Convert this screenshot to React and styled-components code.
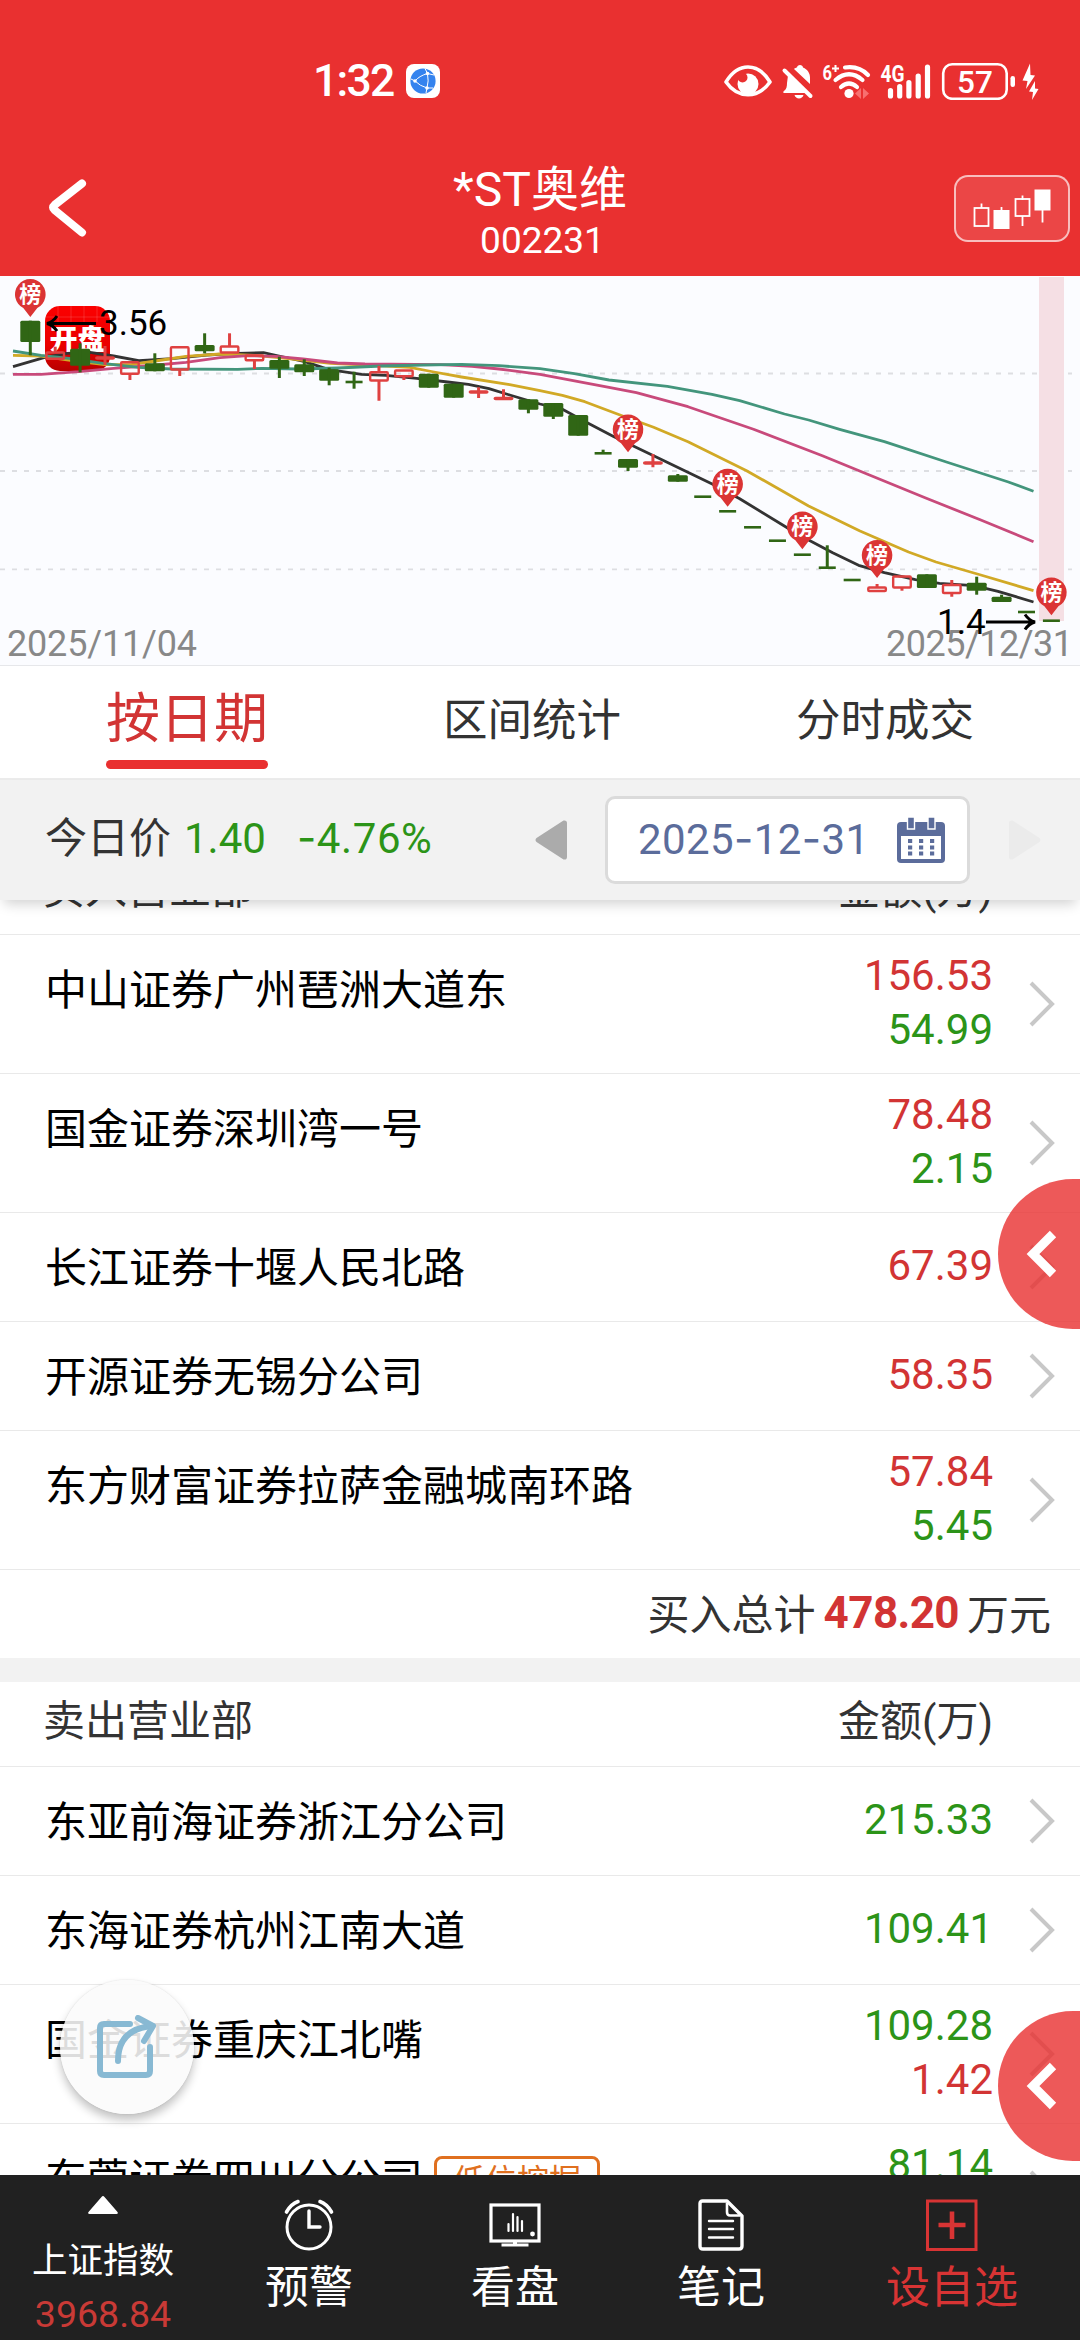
import React from 'react';
import styled, { createGlobalStyle, css } from 'styled-components';

const COLOR = {
  brand: '#e93030',
  red: '#d23434',
  green: '#2c9418',
  text: '#333',
  line: '#e9e9e9',
  panel: '#f2f2f2',
  date: '#5b6c9b',
  nav: '#212121',
};

const FONT = 'Roboto, "Noto Sans CJK SC", sans-serif';

const GlobalStyle = createGlobalStyle`
  * {
    box-sizing: border-box;
  }

  body {
    margin: 0;
    font-family: ${FONT};
    background: #fff;
  }

  svg {
    display: block;
    flex: none;
  }
`;

const Screen = styled.div`
  position: relative;
  display: flex;
  flex-direction: column;
  width: 1080px;
  height: 2340px;
  overflow: hidden;
  background: #fff;
`;

/* ---------- header ---------- */

const Header = styled.header`
  flex: none;
  height: 276px;
  background: ${COLOR.brand};
  color: #fff;
`;

const StatusBar = styled.div`
  display: flex;
  align-items: center;
  height: 140px;
  padding: 22px 40px 0 313px;
`;

const Clock = styled.span`
  width: 93px;
  font-size: 44.5px;
  font-weight: 500;
  letter-spacing: -1.8px;
  line-height: 1;
`;

const StatusIcons = styled.div`
  display: flex;
  align-items: center;
  margin-left: auto;
`;

const TitleBar = styled.div`
  display: grid;
  grid-template-columns: 126px 1fr 126px;
  align-items: center;
  height: 136px;
`;

const BackButton = styled.div`
  padding-left: 47px;
`;

const TitleBlock = styled.div`
  display: flex;
  flex-direction: column;
  align-items: center;
  padding-top: 8px;
`;

const Title = styled.div`
  font-size: 48px;
  line-height: 58px;
`;

const StockCode = styled.div`
  padding-left: 5px;
  font-size: 37px;
  line-height: 44px;
`;

const KlineButton = styled.div`
  display: flex;
  align-items: center;
  justify-content: center;
  width: 116px;
  height: 67px;
  margin-top: 1px;
  border: 2px solid rgba(255, 255, 255, 0.65);
  border-radius: 14px;
  background: #eb4646;
`;

/* ---------- chart ---------- */

const ChartBox = styled.div`
  flex: none;
  height: 390px;
  background: #fbfcff;
  border-bottom: 1px solid #e6e7ea;
`;

/* ---------- tabs and date bar ---------- */

const Tabs = styled.div`
  flex: none;
  display: flex;
  justify-content: space-between;
  height: 114px;
  padding: 0 106px;
  border-bottom: 2px solid #ebebeb;
`;

const Tab = styled.div`
  display: flex;
  flex-direction: column;
  align-items: center;
  font-size: 44.5px;
  line-height: 111px;
  color: ${COLOR.text};

  ${props => props.$active && css`
    font-size: 54px;
    line-height: 108px;
    color: ${COLOR.red};

    &::after {
      content: '';
      width: 162px;
      height: 9px;
      margin-top: -14px;
      border-radius: 5px;
      background: ${COLOR.brand};
    }
  `}
`;

const DateBar = styled.div`
  position: relative;
  z-index: 1;
  flex: none;
  display: flex;
  align-items: center;
  height: 120px;
  padding: 0 39px 0 45px;
  background: ${COLOR.panel};
  box-shadow: 0 8px 12px -4px rgba(0, 0, 0, 0.18);
`;

const PriceLabel = styled.span`
  padding-bottom: 3px;
  font-size: 42px;
  line-height: 1;
  color: ${COLOR.text};
`;

const Price = styled.span`
  margin-left: ${props => props.$gap}px;
  padding-bottom: 3px;
  font-size: 42px;
  line-height: 1;
  letter-spacing: ${props => props.$spacing || 0}px;
  color: ${COLOR.green};
`;

const Dash = styled.span`
  font-family: Inter, sans-serif;
`;

const DatePicker = styled.div`
  display: flex;
  align-items: center;
  justify-content: space-between;
  width: 365px;
  height: 88px;
  margin: 0 39px 0 38px;
  padding: 0 22px 0 30px;
  border: 3px solid #dbdbdb;
  border-radius: 10px;
  background: #fff;
  font-size: 42px;
  color: ${COLOR.date};
`;

const DateValue = styled.span`
  padding-bottom: 3px;
  letter-spacing: 0.4px;
`;

const Spacer = styled.div`
  flex: 1;
`;

/* ---------- list ---------- */

const ListViewport = styled.div`
  flex: 1;
  min-height: 0;
  overflow: hidden;
`;

// The list is scrolled, its first heading sits half under the date bar.
const ListContent = styled.div`
  margin-top: -50px;
`;

const SectionHead = styled.div`
  display: flex;
  justify-content: space-between;
  height: 85px;
  padding: 0 87px 0 43px;
  border-bottom: 1px solid ${COLOR.line};
  font-size: 42px;
  line-height: 80px;
  color: ${COLOR.text};
`;

const Row = styled.div`
  display: flex;
  align-items: flex-start;
  height: ${props => (props.$tall ? 139 : 109)}px;
  padding: 0 24px 0 45px;
  border-bottom: 1px solid ${COLOR.line};
`;

const BranchName = styled.div`
  display: flex;
  align-items: center;
  height: 102px;
  font-size: 42px;
  white-space: nowrap;
  color: #000;
`;

const Tag = styled.span`
  margin: 13px 0 0 11px;
  padding: 0 16px;
  border: 3px solid #e0701f;
  border-radius: 8px;
  font-size: 32px;
  line-height: 45px;
  color: #e0701f;
`;

const Amounts = styled.div`
  margin-left: auto;
  padding-top: ${props => (props.$tall ? 14 : 26)}px;
  text-align: right;
`;

const Amount = styled.div`
  font-size: 42px;
  line-height: 54px;
  color: ${props => COLOR[props.$color]};
`;

const RowArrow = styled.div`
  display: flex;
  align-items: center;
  height: 100%;
  margin-left: 36px;
`;

const Total = styled.div`
  display: flex;
  align-items: center;
  justify-content: flex-end;
  gap: 8px;
  height: 88px;
  padding: 0 29px 6px 0;
  font-size: 42px;
  color: ${COLOR.text};

  strong {
    padding-top: 4px;
    font-size: 44px;
    font-weight: 700;
    letter-spacing: -0.6px;
    color: ${COLOR.red};
  }
`;

const Divider = styled.div`
  height: 24px;
  background: ${COLOR.panel};
`;

/* ---------- floating buttons ---------- */

const SideHandle = styled.div`
  position: absolute;
  z-index: 2;
  top: ${props => props.$top}px;
  right: 0;
  display: flex;
  align-items: center;
  width: 82px;
  height: 150px;
  padding-left: 28px;
  border-radius: 75px 0 0 75px;
  background: rgba(232, 48, 48, 0.8);
`;

const ShareButton = styled.div`
  position: absolute;
  z-index: 2;
  top: 1980px;
  left: 60px;
  display: flex;
  align-items: center;
  justify-content: center;
  width: 134px;
  height: 134px;
  border-radius: 50%;
  background: rgba(250, 250, 250, 0.88);
  box-shadow: 0 6px 10px rgba(0, 0, 0, 0.24), 0 0 2px rgba(0, 0, 0, 0.12);
`;

/* ---------- bottom navigation ---------- */

const Nav = styled.nav`
  position: relative;
  z-index: 3;
  flex: none;
  display: grid;
  grid-template-columns: repeat(4, 206px) 1fr;
  height: 165px;
  background: ${COLOR.nav};
  color: #fff;
`;

const NavItem = styled.div`
  display: flex;
  flex-direction: column;
  align-items: center;
  padding-top: 20px;
  font-size: 44px;
  color: ${props => (props.$accent ? '#d83434' : '#fff')};
`;

const NavIcon = styled.div`
  display: flex;
  align-items: center;
  height: 60px;
`;

const NavLabel = styled.div`
  line-height: 67px;
`;

const IndexName = styled.div`
  padding-top: 20px;
  font-size: 35.5px;
  line-height: 52px;
`;

const IndexValue = styled.div`
  font-size: 37.5px;
  line-height: 54px;
  color: #c93a36;
`;

/* ---------- data ---------- */

// [kind, body top, body bottom, wick top, wick bottom], kind: g fall, r rise, d flat
const CANDLES = [
  ['g', 44.7, 66, 44.7, 79.3],
  ['r', 76, 83.3, 70.7, 83.3],
  ['g', 72.7, 89.7, 67.3, 96.3],
  ['r', 81, 83, 70, 89],
  ['r', 85.7, 98.3, 85.7, 104],
  ['g', 87.3, 95.3, 77.3, 95.3],
  ['r', 70.7, 94, 70.7, 100],
  ['g', 69, 75.3, 57.3, 77.3],
  ['r', 70, 77, 57.3, 77],
  ['r', 79, 84.7, 79, 93],
  ['g', 84, 92.7, 80.7, 102],
  ['g', 88.3, 96.3, 83.3, 100],
  ['g', 93.3, 104.7, 91.7, 109.3],
  ['d', 106, 106, 95.7, 112.7],
  ['r', 95.7, 105, 89.7, 124.7],
  ['r', 94, 100.7, 94, 104],
  ['g', 97.7, 111.7, 97.7, 111.7],
  ['g', 107.7, 121.7, 107.7, 121.7],
  ['r', 115, 117, 111.3, 122],
  ['r', 121.5, 123.5, 113.3, 124],
  ['g', 123.3, 133.7, 123.3, 137.3],
  ['g', 127, 140.7, 127, 143],
  ['g', 139, 159.7, 139, 159.7],
  ['d', 177.3, 177.3, 173.7, 177.3],
  ['g', 183, 191.7, 183, 195],
  ['r', 186, 188, 178, 191.3],
  ['g', 199.3, 205.7, 198, 205.7],
  ['d', 220.7, 220.7, 220.7, 220.7],
  ['d', 235.3, 235.3, 235.3, 235.3],
  ['d', 251.3, 251.3, 251.3, 251.3],
  ['d', 264.7, 264.7, 264.7, 264.7],
  ['d', 278.7, 278.7, 278.7, 278.7],
  ['d', 291.7, 291.7, 269.3, 291.7],
  ['d', 304, 304, 304, 304],
  ['r', 311, 315.5, 308, 315.5],
  ['r', 300, 312, 300, 314.7],
  ['g', 298.3, 312, 298.3, 312],
  ['r', 308.5, 317.5, 304, 320.7],
  ['g', 306.7, 314.7, 300.7, 318.7],
  ['g', 320.7, 326, 318.7, 326],
  ['d', 336, 336, 336, 336],
  ['d', 344.7, 344.7, 344.7, 344.7],
];

const FIRST_X = 30.3;
const STEP = 24.905;
const candleX = index => FIRST_X + index * STEP;

const AVERAGES = [
  {
    color: '#333333',
    points: '13,90.7 44.8,81.3 67,77.3 90,76.3 113.6,80 138.8,84.7 172,82.7 206.6,79 237.6,77.3 263.5,76.7 279,80 304.8,85.7 329,93.7 361.6,98.3 385.7,99.3 416.7,102.3 447.7,106 468.4,108.3 489,112.7 509.7,119 540,128 562.4,133.3 588.2,147.3 614,160.7 653.6,179.7 712.2,208 739.7,222.7 788,252.3 808.6,264 832.7,276.7 858.6,289.3 884.4,296.7 915.4,303.7 939.5,307.3 974,309.7 998,315.3 1033.5,326',
  },
  {
    color: '#d1a926',
    points: '13,79.3 41,80 79,85.7 105,88.7 131,88.7 162,84 186,80.3 220.4,78 255,79.3 286,82.3 330.6,87.3 372,89.3 409.8,91.3 434,96 461.5,101 509.7,108.7 540,114.7 562.4,119.3 584.8,125.7 622.7,140 653.6,151.3 688,165.7 746.6,194.7 808.6,230 860,255 908.5,276 936,286 980.8,299 1033.5,314.7',
  },
  {
    color: '#c84a7b',
    points: '13,98.3 41,98.3 79,95.7 113.6,92.3 144.6,90 186,86.3 220,81.7 248,79.7 275.5,80.3 303,83 337.5,87 365,88 441,88.7 472,90.3 499,93 540,98.3 609,111.3 636.4,116.7 688,130.7 715.6,140.3 753.5,153.3 822.4,179.7 867,198 925.7,222 980.8,244 1033.5,265.7',
  },
  {
    color: '#43957c',
    points: '13,75 41,79.3 69,82.3 103,87.3 137.8,91.3 172,93 237.6,93.3 261.7,92.3 299.6,93 337.5,92 382,90 423.6,89 461.5,88.3 499,89.7 540,92.7 574.4,97.7 609,104 667.4,110.3 712,118.3 739.7,124.7 784.5,138 808.6,144 839.6,153.3 884.4,165.7 946.4,186 1008.4,206 1033.5,215.3',
  },
];

// candle index and y of the pin's tip
const PINS = [[0, 41], [24, 176.3], [28, 230.7], [31, 273.3], [34, 302], [41, 339.3]];

const BUYERS = [
  { name: '中山证券广州琶洲大道东', amounts: [['156.53', 'red'], ['54.99', 'green']], tall: true },
  { name: '国金证券深圳湾一号', amounts: [['78.48', 'red'], ['2.15', 'green']], tall: true },
  { name: '长江证券十堰人民北路', amounts: [['67.39', 'red']] },
  { name: '开源证券无锡分公司', amounts: [['58.35', 'red']] },
  { name: '东方财富证券拉萨金融城南环路', amounts: [['57.84', 'red'], ['5.45', 'green']], tall: true },
];

const SELLERS = [
  { name: '东亚前海证券浙江分公司', amounts: [['215.33', 'green']] },
  { name: '东海证券杭州江南大道', amounts: [['109.41', 'green']] },
  { name: '国金证券重庆江北嘴', amounts: [['109.28', 'green'], ['1.42', 'red']], tall: true },
  { name: '东莞证券四川分公司', amounts: [['81.14', 'green']], tag: '低位挖掘', tall: true },
];

/* ---------- icons ---------- */

const BrowserIcon = () => (
  <svg width="34" height="34" viewBox="0 0 34 34">
    <rect width="34" height="34" rx="8" fill="#fff" />
    <circle cx="17" cy="17" r="12.6" fill="#3483ee" />
    <g fill="none" stroke="#fff" strokeWidth="1">
      <path d="M9 17 Q13 12 21.5 9.5 Q23 17 21 24 Q14 22 9 17" />
      <path d="M21.5 9.5 L19 4.5 M21.5 9.5 L28 11 M21 24 L27 24 M21 24 L20 29 M9 17 L5 15" />
    </g>
    <g fill="#fff">
      <circle cx="9" cy="17" r="1.8" />
      <circle cx="21.5" cy="9.5" r="1.8" />
      <circle cx="21" cy="24" r="1.8" />
    </g>
  </svg>
);

// eye, muted bell, wifi, mobile signal, battery and charging bolts in one strip
const StatusGlyphs = () => (
  <svg width="316" height="38" viewBox="0 0 316 38">
    <path d="M2 20 C14 0 34 0 46 20 C34 37 14 37 2 20 Z" fill="none" stroke="#fff" strokeWidth="3.6" strokeLinejoin="round" />
    <circle cx="24" cy="22" r="10.5" fill="#fff" />
    <circle cx="18.500" cy="15.500" r="5" fill={COLOR.brand} />
    <g fill="#fff">
      <path d="M70 7 C71 6 72.5 5.5 73 5.5 C73 2 79 2 79 5.5 C83.5 7.5 86 11 86 15.5 L86 22 Z" />
      <path d="M64 13.5 L82 31 L60 31 C59 31 59 29.5 60 29 C62.5 27.5 63 24.5 63 21 Z" />
      <path d="M70.5 33 L79.5 33 C78.5 37.5 71.5 37.5 70.5 33 Z" />
    </g>
    <path d="M60.5 8.5 L86.5 34" stroke="#fff" strokeWidth="4" strokeLinecap="round" />
    <g fill="none" stroke="#fff" strokeWidth="4.2" strokeLinecap="round">
      <path d="M121 5.5 Q135 3.5 144 13" />
      <path d="M111.5 18 Q125 6.5 138.5 18" />
      <path d="M117 25 Q125 18 133 25" />
    </g>
    <circle cx="125" cy="31.5" r="4.6" fill="#fff" />
    <path d="M137 26 L131 31.5 L137 37 Z M139 26 L145 31.5 L139 37 Z" fill="#f77070" />
    <text x="98.500" y="17.500" fontSize="21" fontWeight="700" fill="#fff" textLength="9.500" lengthAdjust="spacingAndGlyphs">6</text>
    <path d="M108 6.5 L115 6.5 M111.5 3 L111.5 10" stroke="#fff" strokeWidth="2" />
    <text x="156.500" y="19.500" fontSize="23" fontWeight="700" fill="#fff" textLength="24" lengthAdjust="spacingAndGlyphs">4G</text>
    <path
      d="M166.5 28.5 V34 M175.7 24.5 V34 M184.9 20.5 V34 M194.2 14 V34 M203.5 5 V34"
      stroke="#fff"
      strokeWidth="5.2"
      strokeLinecap="round"
    />
    <rect x="219.200" y="2.200" width="63.500" height="34.600" rx="9" fill="none" stroke="#fff" strokeWidth="2.6" />
    <rect x="286.500" y="14" width="4.500" height="11" rx="2.200" fill="#fff" />
    <text x="251" y="30.500" fontSize="31.500" fontWeight="500" fill="#fff" textAnchor="middle">57</text>
    <path d="M306 1.5 L298.5 18.5 L303.5 19 L302 27 L311 13.5 L306.5 13 Z" fill="#fff" />
    <path d="M311 19 L305 29.5 L309 30 L308 38 L314.5 27 L311 26.5 Z" fill="#fff" />
  </svg>
);

const BackIcon = () => (
  <svg width="40" height="58" viewBox="0 0 40 58">
    <path d="M35 4.5 L7.5 26 Q4.5 28.5 7.5 31 L35 53.5" fill="none" stroke="#fff" strokeWidth="8" strokeLinecap="round" strokeLinejoin="round" />
  </svg>
);

const KlineIcon = () => (
  <svg width="78" height="42" viewBox="0 0 78 42">
    <g fill="none" stroke="#fff" strokeWidth="1.8">
      <rect x="1.500" y="20" width="14" height="18" />
      <path d="M8.5 15.5 V20 M28.5 19 V23 M49.5 7.5 V12 M49.5 28 V38 M69.5 22 V34.5" />
      <rect x="42.500" y="11" width="14" height="17" />
    </g>
    <path d="M20.5 22 h16 v19 h-16 Z M61.5 1.5 h16 v21 h-16 Z" fill="#fff" />
  </svg>
);

const CalendarIcon = () => (
  <svg width="48" height="46" viewBox="0 0 48 46">
    <rect y="5" width="48" height="41" rx="4" fill={COLOR.date} />
    <rect x="4" y="19" width="40" height="23" fill="#fff" />
    <path d="M10.5 0 h7 v12 h-7 Z M31 0 h7 v12 h-7 Z" fill={COLOR.date} stroke="#fff" strokeWidth="1.4" />
    <g fill={COLOR.date}>
      {[22, 28.5, 34.5].map(y => (
        [11, 22, 33].map(x => <rect key={`${x}-${y}`} x={x} y={y} width="4.200" height="4" />)
      ))}
    </g>
  </svg>
);

const PrevIcon = () => (
  <svg width="32" height="40" viewBox="0 0 32 40">
    <path d="M28.5 0.5 Q32 0 32 3 V37 Q32 40 28.5 39.5 L1.5 22 Q-0.5 20 1.5 18 Z" fill="#ababab" />
  </svg>
);

const NextIcon = () => (
  <svg width="32" height="40" viewBox="0 0 32 40">
    <path d="M3.5 0.5 Q0 0 0 3 V37 Q0 40 3.5 39.5 L30.5 22 Q32.5 20 30.5 18 Z" fill="#ebebeb" />
  </svg>
);

const ArrowIcon = () => (
  <svg width="27" height="46" viewBox="0 0 27 46">
    <path d="M2 2 L23 23 L2 44" fill="none" stroke="#c8c8c8" strokeWidth="4" />
  </svg>
);

const HandleIcon = () => (
  <svg width="32" height="48" viewBox="0 0 32 48">
    <path d="M27 4 L7 24 L27 44" fill="none" stroke="#fff" strokeWidth="9" />
  </svg>
);

const ShareIcon = () => (
  <svg width="62" height="64" viewBox="0 0 62 64">
    <g fill="none" stroke="#88b9d3" strokeWidth="6" strokeLinecap="round" strokeLinejoin="round">
      <path d="M34 9 H8 Q4 9 4 13 V56 Q4 60 8 60 H50 Q54 60 54 56 V32" />
      <path d="M22 46 Q22 14 56 11" />
      <path d="M42 3 L57 11 L48 26" />
    </g>
  </svg>
);

const AlarmIcon = () => (
  <svg width="50" height="52" viewBox="0 0 50 52" fill="none" stroke="#fff" strokeLinecap="round">
    <circle cx="25" cy="28" r="22" strokeWidth="3" />
    <path d="M25 12 V28 H36" strokeWidth="3.4" />
    <path d="M2.5 13 Q7 5 14 2.5 M36 2.5 Q43 5 47.5 13" strokeWidth="3.6" />
  </svg>
);

const MonitorIcon = () => (
  <svg width="52" height="44" viewBox="0 0 52 44">
    <g fill="none" stroke="#fff">
      <rect x="2" y="2" width="48" height="36" strokeWidth="3.2" />
      <path d="M12.5 42 H39.5" strokeWidth="3" />
      <path d="M26 38 V42" strokeWidth="4" />
      <path d="M19.5 21 V28 M24 11 V28 M28.5 14 V28 M33 18 V28" strokeWidth="2.2" strokeLinecap="round" />
    </g>
    <circle cx="43.500" cy="31" r="2.400" fill="#fff" />
  </svg>
);

const NoteIcon = () => (
  <svg width="46" height="52" viewBox="0 0 46 52" fill="none" stroke="#fff" strokeLinejoin="round">
    <path d="M4.5 2 H29 L44 17 V47 Q44 50 41 50 H5 Q2 50 2 47 V4.5 Q2 2 4.5 2 Z" strokeWidth="3.4" />
    <path d="M29 4 V13 Q29 16.5 32 16.5 H42" strokeWidth="2.6" />
    <path d="M11 22 H35 M11 30 H35 M11 38.5 H35" strokeWidth="2.4" strokeLinecap="round" />
  </svg>
);

const AddIcon = () => (
  <svg width="52" height="52" viewBox="0 0 52 52" fill="none" stroke="#d83434">
    <rect x="1.500" y="2" width="48.500" height="48.500" strokeWidth="3" />
    <path d="M12.5 26 H39.5 M26 12.5 V40" strokeWidth="4.6" />
  </svg>
);

const TriangleIcon = () => (
  <svg width="30" height="20" viewBox="0 0 30 20">
    <path d="M13.5 2 Q15 0 16.5 2 L29.5 17 Q30.5 19 28.5 19 H1.5 Q-0.5 19 0.5 17 Z" fill="#fff" />
  </svg>
);

/* ---------- parts ---------- */

const Candle = ({ index, data }) => {
  const [kind, top, bottom, high, low] = data;
  const x = candleX(index);

  if (kind === 'd') {
    return (
      <g stroke="#306615">
        <path d={`M${x - 8.5} ${top} H${x + 8.5}`} strokeWidth="2.6" />
        {low > high && <path d={`M${x} ${high} V${low}`} strokeWidth="3" />}
      </g>
    );
  }

  if (kind === 'g') {
    return (
      <g fill="#306615">
        <rect x={x - 10} y={top} width="20" height={bottom - top} rx="1.5" />
        <rect x={x - 1.5} y={high} width="3" height={low - high} />
      </g>
    );
  }

  return (
    <g fill="none" stroke="#df4141" strokeWidth="2.4">
      <rect x={x - 8.8} y={top + 0.5} width="17.6" height={bottom - top - 1} rx="1" />
      <path d={`M${x} ${high} V${top} M${x} ${bottom} V${low}`} strokeWidth="3" />
    </g>
  );
};

const Pin = ({ x, tip }) => (
  <g>
    <path
      d={`M${x} ${tip} L${x - 7} ${tip - 9} A15.3 15.3 0 1 1 ${x + 7} ${tip - 9} Z`}
      fill="#db3434"
    />
    <text x={x} y={tip - 15} fontSize="22" fontWeight="700" fill="#fff" textAnchor="middle">榜</text>
  </g>
);

const Chart = () => (
  <ChartBox>
    <svg width="1080" height="389" viewBox="0 0 1080 389" fontFamily={FONT}>
      <defs>
        <linearGradient id="opening" x1="0" y1="0" x2="0" y2="1">
          <stop offset="0" stopColor="#fb0000" />
          <stop offset="0.6" stopColor="#ea0000" />
          <stop offset="1" stopColor="#b80000" />
        </linearGradient>
      </defs>

      <g stroke="#dddee2" strokeWidth="1.8" strokeDasharray="5 7">
        <path d="M0 97.5 H1072 M0 195 H1072 M0 293.3 H1072" />
      </g>
      <rect x="1039" y="1" width="25" height="344" fill="#f5dfe4" />

      <rect x="45" y="30" width="65" height="65" rx="15" fill="url(#opening)" />
      <path
        d="M58 30 V46 M71 30 V46 M84 30 V46 M97 30 V46 M46 41 H109"
        stroke="#fff"
        strokeOpacity="0.14"
      />
      <text x="77.500" y="74" fontSize="28" fontWeight="900" fill="#fff" textAnchor="middle">开盘</text>

      {AVERAGES.map(({ color, points }) => (
        <polyline key={color} points={points} fill="none" stroke={color} strokeWidth="2.8" strokeLinejoin="round" />
      ))}
      {CANDLES.map((data, index) => <Candle key={index} index={index} data={data} />)}
      {PINS.map(([index, tip]) => <Pin key={index} x={candleX(index)} tip={tip} />)}

      <g fontSize="36" fill="#888">
        <text x="7" y="379.500" textLength="190">2025/11/04</text>
        <text x="1073" y="379.500" textAnchor="end" textLength="187">2025/12/31</text>
      </g>

      <g fill="none" stroke="#000" strokeWidth="3">
        <path d="M96 47.5 H49 M57 40 Q53 46 47 47.5 Q53 49 57 55" />
        <path d="M986 346 H1033 M1025 338.5 Q1029 344.5 1035 346 Q1029 347.5 1025 353.5" />
      </g>
      <g fontSize="35" fill="#000">
        <text x="99" y="58.500">3.56</text>
        <text x="937" y="357.500">1.4</text>
      </g>
    </svg>
  </ChartBox>
);

const BranchRow = ({ name, amounts, tag, tall }) => (
  <Row $tall={tall}>
    <BranchName>
      {name}
      {tag && <Tag>{tag}</Tag>}
    </BranchName>
    <Amounts $tall={tall}>
      {amounts.map(([value, color]) => <Amount key={value} $color={color}>{value}</Amount>)}
    </Amounts>
    <RowArrow><ArrowIcon /></RowArrow>
  </Row>
);

const App = () => (
  <Screen>
    <GlobalStyle />

    <Header>
      <StatusBar>
        <Clock>1:32</Clock>
        <BrowserIcon />
        <StatusIcons><StatusGlyphs /></StatusIcons>
      </StatusBar>
      <TitleBar>
        <BackButton><BackIcon /></BackButton>
        <TitleBlock>
          <Title>*ST奥维</Title>
          <StockCode>002231</StockCode>
        </TitleBlock>
        <KlineButton><KlineIcon /></KlineButton>
      </TitleBar>
    </Header>

    <Chart />

    <Tabs>
      <Tab $active>按日期</Tab>
      <Tab>区间统计</Tab>
      <Tab>分时成交</Tab>
    </Tabs>

    <DateBar>
      <PriceLabel>今日价</PriceLabel>
      <Price $gap={13}>1.40</Price>
      <Price $gap={31} $spacing={0.6}><Dash>-</Dash>4.76%</Price>
      <Spacer />
      <PrevIcon />
      <DatePicker>
        <DateValue>2025<Dash>-</Dash>12<Dash>-</Dash>31</DateValue>
        <CalendarIcon />
      </DatePicker>
      <NextIcon />
    </DateBar>

    <ListViewport>
      <ListContent>
        <SectionHead>
          <span>买入营业部</span>
          <span>金额(万)</span>
        </SectionHead>
        {BUYERS.map(row => <BranchRow key={row.name} {...row} />)}
        <Total>
          <span>买入总计</span>
          <strong>478.20</strong>
          <span>万元</span>
        </Total>
        <Divider />
        <SectionHead>
          <span>卖出营业部</span>
          <span>金额(万)</span>
        </SectionHead>
        {SELLERS.map(row => <BranchRow key={row.name} {...row} />)}
      </ListContent>
    </ListViewport>

    <SideHandle $top={1179}><HandleIcon /></SideHandle>
    <SideHandle $top={2011}><HandleIcon /></SideHandle>
    <ShareButton><ShareIcon /></ShareButton>

    <Nav>
      <NavItem>
        <TriangleIcon />
        <IndexName>上证指数</IndexName>
        <IndexValue>3968.84</IndexValue>
      </NavItem>
      <NavItem>
        <NavIcon><AlarmIcon /></NavIcon>
        <NavLabel>预警</NavLabel>
      </NavItem>
      <NavItem>
        <NavIcon><MonitorIcon /></NavIcon>
        <NavLabel>看盘</NavLabel>
      </NavItem>
      <NavItem>
        <NavIcon><NoteIcon /></NavIcon>
        <NavLabel>笔记</NavLabel>
      </NavItem>
      <NavItem $accent>
        <NavIcon><AddIcon /></NavIcon>
        <NavLabel>设自选</NavLabel>
      </NavItem>
    </Nav>
  </Screen>
);

export default App;
